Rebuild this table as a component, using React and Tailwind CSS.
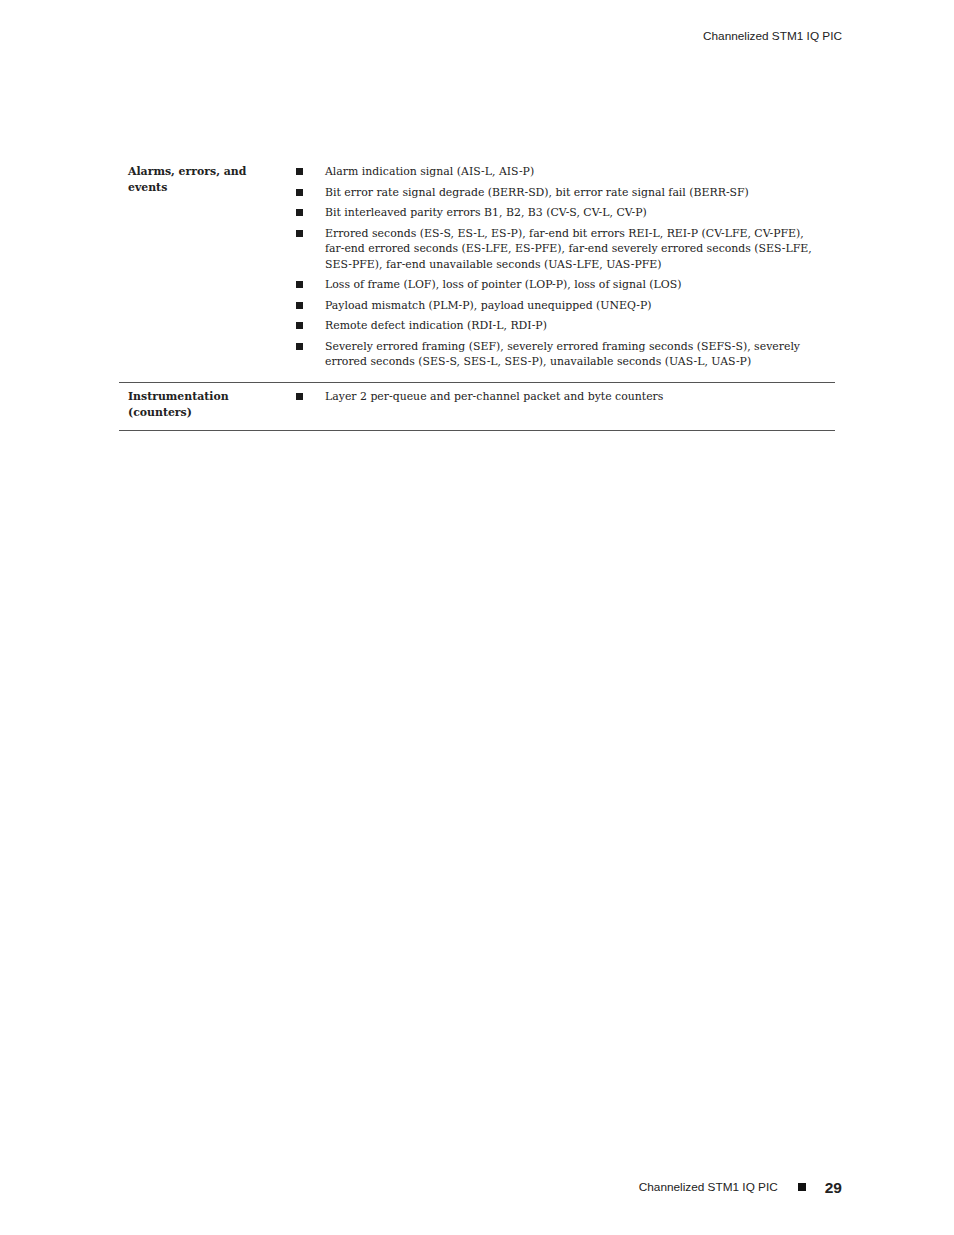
import React from "react";

const alarms = [
  ["Alarm indication signal (AIS-L, AIS-P)"],
  ["Bit error rate signal degrade (BERR-SD), bit error rate signal fail (BERR-SF)"],
  ["Bit interleaved parity errors B1, B2, B3 (CV-S, CV-L, CV-P)"],
  [
    "Errored seconds (ES-S, ES-L, ES-P), far-end bit errors REI-L, REI-P (CV-LFE, CV-PFE),",
    "far-end errored seconds (ES-LFE, ES-PFE), far-end severely errored seconds (SES-LFE,",
    "SES-PFE), far-end unavailable seconds (UAS-LFE, UAS-PFE)",
  ],
  ["Loss of frame (LOF), loss of pointer (LOP-P), loss of signal (LOS)"],
  ["Payload mismatch (PLM-P), payload unequipped (UNEQ-P)"],
  ["Remote defect indication (RDI-L, RDI-P)"],
  [
    "Severely errored framing (SEF), severely errored framing seconds (SEFS-S), severely",
    "errored seconds (SES-S, SES-L, SES-P), unavailable seconds (UAS-L, UAS-P)",
  ],
];

const Bullet = ({ lines }) => (
  <li className="flex">
    <span className="w-[29px] shrink-0 flex items-start pt-[4px]">
      <span className="block w-[7px] h-[7px] bg-[#1a1a1a]" />
    </span>
    <span className="flex flex-col">
      {lines.map((l, i) => (
        <span key={i} className="whitespace-nowrap">
          {l}
        </span>
      ))}
    </span>
  </li>
);

const Row = ({ label, items, bottomPad }) => (
  <div className={`flex border-b border-[#555] pt-[6px] ${bottomPad}`}>
    <div className="w-[177px] shrink-0 pl-[9px] font-bold leading-[16px] text-[10.9px]">
      {label.map((l, i) => (
        <div key={i}>{l}</div>
      ))}
    </div>
    <ul className="flex flex-col gap-[5px]">
      {items.map((lines, i) => (
        <Bullet key={i} lines={lines} />
      ))}
    </ul>
  </div>
);

export default function App() {
  return (
    <div
      className="w-[954px] h-[1235px] bg-white text-[#222] flex flex-col"
      style={{ fontFamily: '"DejaVu Serif", serif' }}
    >
      {/* running header */}
      <div className="flex justify-end pr-[112px] pt-[29px] text-[11.8px] leading-[14px] font-['Liberation_Sans',sans-serif]">
        Channelized STM1 IQ PIC
      </div>

      {/* table */}
      <div className="ml-[119px] w-[716px] mt-[115px] text-[10.9px] leading-[15.5px]">
        <Row label={["Alarms, errors, and", "events"]} items={alarms} bottomPad="pb-[12px]" />
        <Row
          label={["Instrumentation", "(counters)"]}
          items={[["Layer 2 per-queue and per-channel packet and byte counters"]]}
          bottomPad="pb-[9px]"
        />
      </div>

      {/* footer */}
      <div className="mt-auto mb-[36px] flex justify-end items-center pr-[112px] font-['Liberation_Sans',sans-serif]">
        <span className="text-[11.8px]">Channelized STM1 IQ PIC</span>
        <span className="block w-[8px] h-[8px] bg-[#111] ml-[20px] mr-[19px]" />
        <span className="text-[15.5px] font-bold">29</span>
      </div>
    </div>
  );
}
